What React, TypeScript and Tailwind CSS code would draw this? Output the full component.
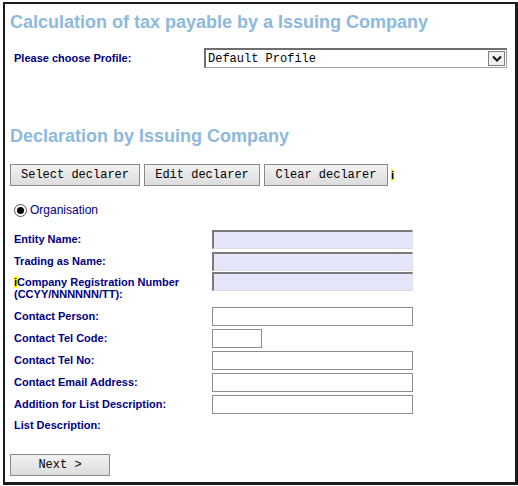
import React from "react";

const label = "font-['Liberation_Sans',Arial,sans-serif] text-[11px] font-bold text-[#000080] leading-[12px]";
const btn =
  "h-[22px] border border-[#8a8a8a] bg-gradient-to-b from-[#f2f2f2] to-[#dcdcdc] font-['Liberation_Mono','Courier_New',monospace] text-[12px] text-black";

function Field({ text, width = "w-[201px]", tinted = false }: { text: React.ReactNode; width?: string; tinted?: boolean }) {
  return (
    <div className="flex items-center h-[22px]">
      <div className={`${label} w-[198px] shrink-0`}>{text}</div>
      <div
        className={`${width} h-[19px] border border-[#8c8c8c] ${
          tinted ? "bg-[#e6e6fa] border-t-2 border-l-2 border-t-[#7a7a7a] border-l-[#7a7a7a] border-r-[#dcdcdc] border-b-[#dcdcdc]" : "bg-white"
        }`}
      />
    </div>
  );
}

export default function App() {
  return (
    <div className="w-[518px] h-[486px] bg-white pt-[2px] pl-[3px]">
      <div className="w-[515px] h-[483px] border-2 border-[#1c1c1c] border-r-[3px] border-b-[3px] px-[5px] font-['Liberation_Sans',Arial,sans-serif]">
        <h1 className="text-[18px] font-bold text-[#8cb9dc] leading-[22px] pt-[7px]">
          Calculation of tax payable by a Issuing Company
        </h1>

        <div className="flex items-center mt-[15px] h-[20px]">
          <div className={`${label} w-[194px] pl-[4px]`}>Please choose Profile:</div>
          <div className="w-[303px] h-[20px] border border-[#a0a0a0] border-t-2 border-l-2 border-t-[#6e6e6e] border-l-[#6e6e6e] flex items-center justify-between bg-white">
            <span className="pl-[2px] font-['Liberation_Mono','Courier_New',monospace] text-[12px] text-black">Default Profile</span>
            <span className="w-[17px] h-[15px] mr-[1px] border border-[#808080] bg-[#f0f0f0] flex items-center justify-center">
              <svg width="10" height="7" viewBox="0 0 10 7">
                <path d="M1 1.5 L5 5.5 L9 1.5" fill="none" stroke="#111" strokeWidth="2" />
              </svg>
            </span>
          </div>
        </div>

        <h2 className="text-[18px] font-bold text-[#8cb9dc] leading-[22px] mt-[57px]">Declaration by Issuing Company</h2>

        <div className="flex items-center gap-[4px] mt-[17px]">
          <button className={`${btn} w-[130px]`}>Select declarer</button>
          <button className={`${btn} w-[116px]`}>Edit declarer</button>
          <button className={`${btn} w-[124px]`}>Clear declarer</button>
          <span className="bg-[#ffff00] text-[11px] font-bold leading-[12px] text-black -ml-[1px]">i</span>
        </div>

        <div className="flex items-center mt-[16px] ml-[4px] h-[16px]">
          <span className="w-[13px] h-[13px] rounded-full border border-[#555] bg-white flex items-center justify-center">
            <span className="w-[7px] h-[7px] rounded-full bg-black" />
          </span>
          <span className="ml-[3px] text-[12px] text-[#000080]">Organisation</span>
        </div>

        <div className="pl-[4px] mt-[10px]">
          <Field text="Entity Name:" tinted />
          <Field text="Trading as Name:" tinted />
          <div className="flex items-start h-[33px]">
            <div className={`${label} w-[198px] shrink-0 pt-[4px]`}>
              <span className="bg-[#ffff00]">i</span>Company Registration Number
              <br />
              (CCYY/NNNNNN/TT):
            </div>
            <div className="w-[201px] h-[19px] border-t-2 border-l-2 border-t-[#7a7a7a] border-l-[#7a7a7a] border-r border-b border-r-[#dcdcdc] border-b-[#dcdcdc] bg-[#e6e6fa]" />
          </div>
          <Field text="Contact Person:" />
          <Field text="Contact Tel Code:" width="w-[50px]" />
          <Field text="Contact Tel No:" />
          <Field text="Contact Email Address:" />
          <Field text="Addition for List Description:" />
          <div className={`${label} h-[20px] flex items-center`}>List Description:</div>
        </div>

        <button className={`${btn} w-[100px] mt-[19px]`}>Next &gt;</button>
      </div>
    </div>
  );
}
